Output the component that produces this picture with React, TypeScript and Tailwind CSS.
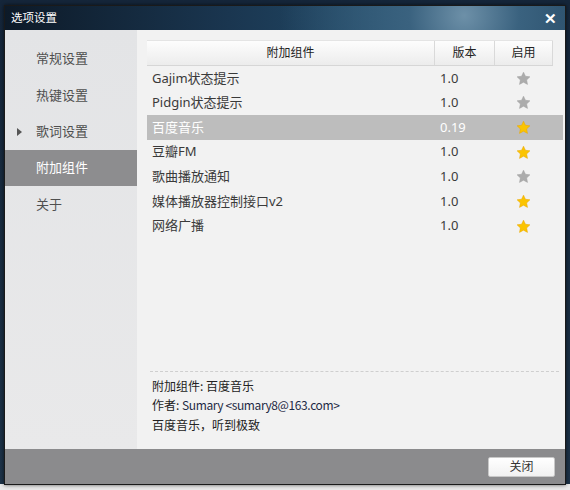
import React from 'react';

type Plugin = { name: string; version: string; enabled: boolean };

const PLUGINS: Plugin[] = [
    { name: 'Gajim状态提示', version: '1.0', enabled: false },
    { name: 'Pidgin状态提示', version: '1.0', enabled: false },
    { name: '百度音乐', version: '0.19', enabled: true },
    { name: '豆瓣FM', version: '1.0', enabled: true },
    { name: '歌曲播放通知', version: '1.0', enabled: false },
    { name: '媒体播放器控制接口v2', version: '1.0', enabled: true },
    { name: '网络广播', version: '1.0', enabled: true },
];

const MENU = ['常规设置', '热键设置', '歌词设置', '附加组件', '关于'];

const Star: React.FC<{ on: boolean }> = ({ on }) => (
    <svg width="15" height="15" viewBox="0 0 24 24">
        <path
            d="M12 1.8l3.1 6.6 7.2.9-5.3 5 1.4 7.1L12 17.9l-6.4 3.5 1.4-7.1-5.3-5 7.2-.9z"
            fill={on ? '#fbc400' : '#acacac'}
            stroke={on ? '#e9a400' : '#a0a0a0'}
            strokeWidth="0.8"
            strokeLinejoin="round"
        />
    </svg>
);

const App: React.FC = () => {
    const selectedMenu = 3;
    const selectedRow = 2;

    return (
        <div
            className="w-[570px] h-[490px] overflow-hidden pl-[4px] pt-[5px] bg-[linear-gradient(to_bottom,#15263a_0,#1d3348_484px,#e9e9e9_484px)]"
            style={{ fontFamily: '"Noto Sans", "Noto Sans CJK SC", sans-serif' }}
        >
            <div className="w-[562px] h-[480px] flex flex-col border border-[#1a1a1a] shadow-[0_0_4px_rgba(0,0,0,0.6)]">
                {/* title bar */}
                <div className="h-[24px] flex items-center justify-between pl-[6px] pr-[8px] bg-[radial-gradient(circle_at_82%_40%,#6d90a8_0,#3a627f_12%,transparent_40%),linear-gradient(to_right,#0d1a28,#1a3650_40%,#24506e_75%,#1c3c57)]">
                    <span className="text-[11.5px] text-white leading-none">选项设置</span>
                    <span className="text-white text-[15px] font-bold leading-none">✕</span>
                </div>

                {/* body */}
                <div className="flex-1 flex min-h-0">
                    {/* sidebar */}
                    <div className="w-[132px] pt-[11px] bg-[linear-gradient(to_bottom,#e3e4e6,#e9e9ea)]">
                        {MENU.map((item, i) => (
                            <div
                                key={item}
                                className={
                                    'h-[36.3px] flex items-center relative pl-[31px] text-[13px] ' +
                                    (i === selectedMenu ? 'bg-[#8d8d8f] text-white' : 'text-[#4f4f4f]')
                                }
                            >
                                {i === 2 && (
                                    <span className="absolute left-[12px] w-0 h-0 border-y-[4px] border-y-transparent border-l-[5px] border-l-[#555]" />
                                )}
                                {item}
                            </div>
                        ))}
                    </div>

                    {/* content */}
                    <div className="flex-1 flex flex-col pl-[10px] pr-[2px] pt-[10px] pb-[15px] bg-[#f2f2f2]">
                        <div className="flex h-[26px] text-[12px] text-[#222]">
                            <div className="flex w-[406px] bg-[linear-gradient(to_bottom,#fdfdfd,#ececec)] border-t border-[#e4e4e4] border-b border-b-[#d6d6d6]">
                                <div className="w-[287px] flex items-center justify-center">附加组件</div>
                                <div className="w-[60px] flex items-center justify-center border-l border-[#d9d9d9]">版本</div>
                                <div className="w-[59px] flex items-center justify-center border-l border-r border-[#d9d9d9]">启用</div>
                            </div>
                        </div>

                        {PLUGINS.map((p, i) => (
                            <div
                                key={p.name}
                                className={
                                    'flex h-[24.65px] items-center text-[13px] w-[416px] ' +
                                    (i === selectedRow ? 'bg-[#bdbdbd] text-white' : 'text-[#3a3a3a]')
                                }
                            >
                                <div className="w-[287px] pl-[5px]">{p.name}</div>
                                <div className="w-[60px] pl-[6px]">{p.version}</div>
                                <div className="w-[59px] flex justify-center">
                                    <Star on={p.enabled} />
                                </div>
                            </div>
                        ))}

                        <div className="flex-1" />

                        <div className="ml-[3px] mr-[4px] border-t border-dashed border-[#cfcfcf]" />
                        <div
                            className="pt-[4px] pl-[5px] text-[12px] text-[#222] leading-[19.5px]"
                            style={{ fontFamily: '"Noto Sans CJK SC", sans-serif' }}
                        >
                            <div>附加组件: 百度音乐</div>
                            <div>
                                作者: <span className="text-[#1f2b45] tracking-[-0.4px]">Sumary &lt;sumary8@163.com&gt;</span>
                            </div>
                            <div>百度音乐，听到极致</div>
                        </div>
                    </div>
                </div>

                {/* footer */}
                <div className="h-[35px] bg-[#8b8b8d] flex items-center justify-end pr-[10px]">
                    <button className="w-[67px] h-[20px] bg-[linear-gradient(to_bottom,#ffffff,#f1f1f1)] border border-[#c8c8c8] rounded-[2px] text-[12px] text-[#333] leading-none">
                        关闭
                    </button>
                </div>
            </div>
        </div>
    );
};

export default App;
